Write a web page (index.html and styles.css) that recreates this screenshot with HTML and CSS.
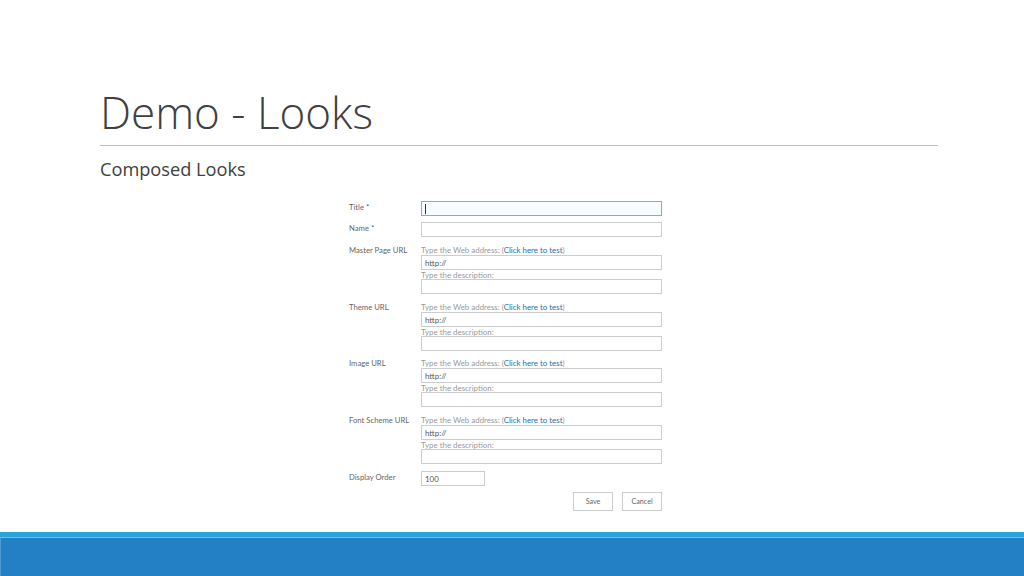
FILE: index.html
```html
<!DOCTYPE html>
<html lang="en">
  <head>
    <meta charset="UTF-8" />
    <title>Demo - Looks</title>
    <link rel="stylesheet" href="styles.css">
  </head>
  <body>
    <main class="slide">
      <header class="header">
        <h1>Demo - Looks</h1>
      </header>
      <h2 class="subtitle">Composed Looks</h2>
      <section class="form">
        <div class="row row-simple">
          <div class="label">Title <span class="req">*</span></div>
          <div class="box box-focus"><span class="caret"></span></div>
        </div>
        <div class="row row-simple">
          <div class="label">Name <span class="req">*</span></div>
          <div class="box"></div>
        </div>
        <div class="row row-url">
          <div class="label">Master Page URL</div>
          <div class="url">
            <div class="hint">Type the Web address: (<a>Click here to test</a>)</div>
            <div class="box">http://</div>
            <div class="hint hint-desc">Type the description:</div>
            <div class="box"></div>
          </div>
        </div>
        <div class="row row-url">
          <div class="label">Theme URL</div>
          <div class="url">
            <div class="hint">Type the Web address: (<a>Click here to test</a>)</div>
            <div class="box">http://</div>
            <div class="hint hint-desc">Type the description:</div>
            <div class="box"></div>
          </div>
        </div>
        <div class="row row-url">
          <div class="label">Image URL</div>
          <div class="url">
            <div class="hint">Type the Web address: (<a>Click here to test</a>)</div>
            <div class="box">http://</div>
            <div class="hint hint-desc">Type the description:</div>
            <div class="box"></div>
          </div>
        </div>
        <div class="row row-url">
          <div class="label">Font Scheme URL</div>
          <div class="url">
            <div class="hint">Type the Web address: (<a>Click here to test</a>)</div>
            <div class="box">http://</div>
            <div class="hint hint-desc">Type the description:</div>
            <div class="box"></div>
          </div>
        </div>
        <div class="row row-simple">
          <div class="label">Display Order</div>
          <div class="box box-short">100</div>
        </div>
        <div class="buttons">
          <div class="btn">Save</div>
          <div class="btn">Cancel</div>
        </div>
      </section>
    </main>
    <footer class="footer">
      <div class="footer-main"></div>
    </footer>
  </body>
</html>
```

FILE: styles.css
```css
* {
  padding: 0;
  margin: 0;
  box-sizing: border-box;
}

body {
  width: 1024px;
  height: 576px;
  overflow: hidden;
  background-color: #fff;
  font-family: "Open Sans", sans-serif;
  display: flex;
  flex-direction: column;
}

.slide {
  flex: 1;
  padding-left: 100px;
}

.header {
  width: 838px;
  height: 146px;
  border-bottom: 1px solid #bdbdbd;
  padding-top: 81px;
}

h1 {
  font-size: 44px;
  line-height: 62px;
  font-weight: 300;
  color: #404040;
}

.subtitle {
  font-size: 18.2px;
  line-height: 26px;
  font-weight: 400;
  color: #404040;
  margin-top: 10px;
}

.form {
  width: 313px;
  margin-left: 249px;
  margin-top: 19px;
  font-family: Lato, sans-serif;
  font-size: 7.9px;
  color: #666;
}

.row {
  display: grid;
  grid-template-columns: 72px 241px;
}

.row-simple {
  margin-bottom: 6px;
}

.row-url {
  height: 56.5px;
  padding-top: 2px;
}

.row-url + .row-simple {
  margin-top: 2px;
}

.label {
  font-size: 7.7px;
  line-height: 11px;
  white-space: nowrap;
}

.row-simple .label {
  line-height: 13px;
}

.req {
  color: #0072c6;
}

.url {
  display: flex;
  flex-direction: column;
}

.hint {
  height: 10px;
  line-height: 10px;
  color: #999;
  white-space: nowrap;
}

.hint-desc {
  height: 9px;
}

.hint a {
  color: #1d6fae;
}

.box {
  height: 15px;
  border: 1px solid #cdcdcd;
  line-height: 14px;
  padding-left: 3px;
  color: #555;
}

.box-focus {
  border-color: #6fb3e3;
  background-color: #f7fcff;
  display: flex;
  align-items: center;
}

.caret {
  width: 1px;
  height: 10px;
  background-color: #333;
}

.box-short {
  width: 64px;
}

.buttons {
  display: flex;
  justify-content: flex-end;
  gap: 9px;
  margin-top: 3px;
}

.btn {
  width: 40px;
  height: 19px;
  border: 1px solid #cdcdcd;
  text-align: center;
  line-height: 18px;
  font-size: 7.2px;
  color: #666;
}

.footer {
  height: 44px;
  background-color: #27a4d8;
  padding-top: 5px;
}

.footer-main {
  height: 39px;
  background-color: #2480c4;
  border-top: 1px solid #6cc0e6;
  border-left: 1px solid #4f9ad2;
}
```
